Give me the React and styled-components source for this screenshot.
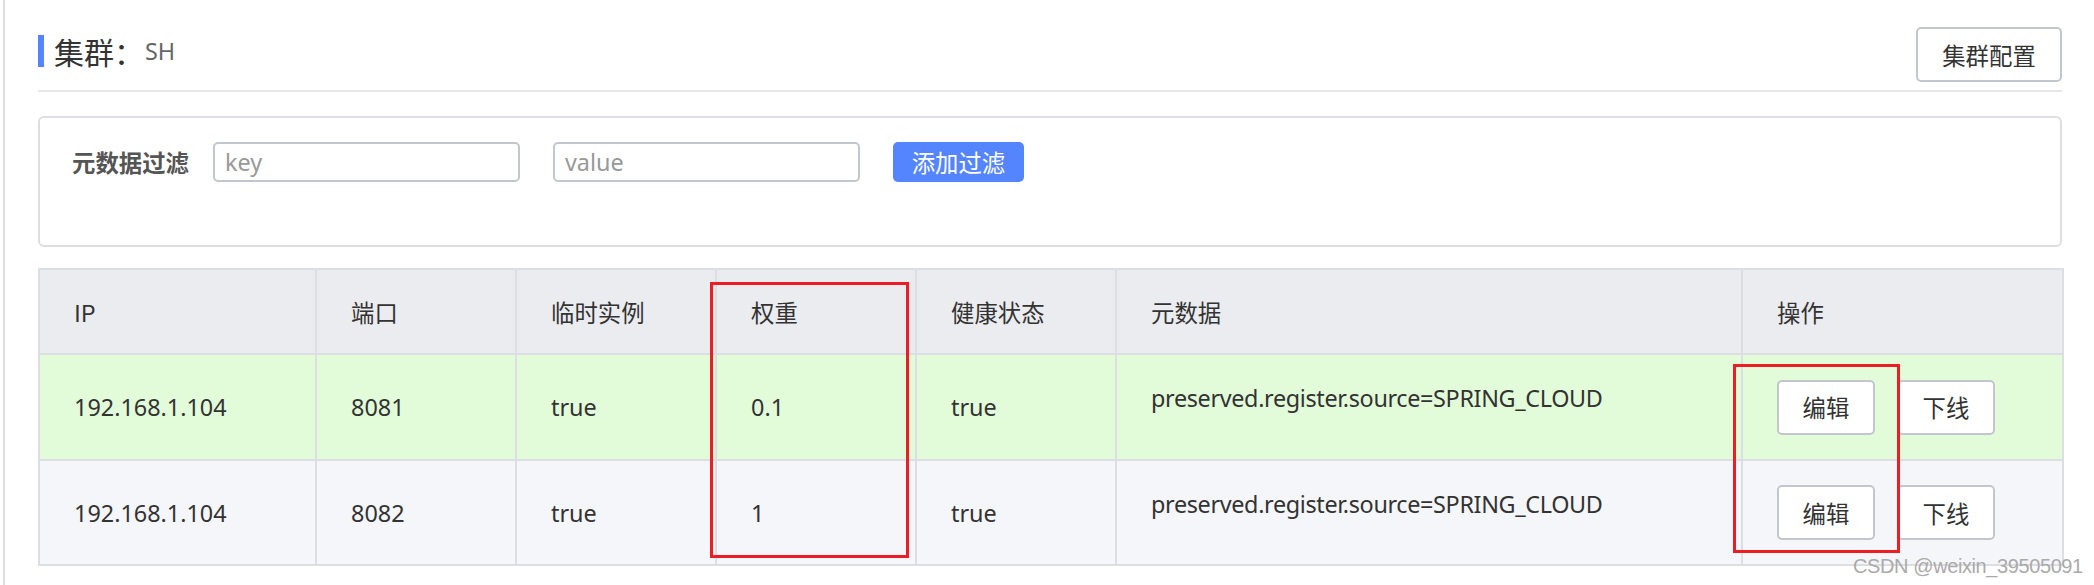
import React from "react";
import styled, { createGlobalStyle } from "styled-components";

const GlobalStyle = createGlobalStyle`
  html, body {
    margin: 0;
    padding: 0;
    background: #fff;
    font-family: "Noto Sans", "Noto Sans CJK SC", sans-serif;
    color: #333;
  }
  * { box-sizing: border-box; }
`;

const Page = styled.div`
  position: relative;
  min-height: 585px;
  margin-left: 3px;
  border-left: 2px solid #dcdde2;
  padding: 27px 32px 0 33px;
`;

const Header = styled.div`
  display: flex;
  justify-content: space-between;
  align-items: flex-start;
  padding-bottom: 8px;
  border-bottom: 2px solid #e6e7eb;
`;

const Title = styled.div`
  display: flex;
  align-items: center;
  margin-top: 8px;
  height: 32px;
  border-left: 6px solid #5584ff;
  padding-left: 10px;
  font-family: "Noto Sans CJK SC", sans-serif;
  font-size: 30px;
  line-height: 32px;
  color: #333;
`;

const ClusterName = styled.span`
  font-family: "Noto Sans", sans-serif;
  font-size: 23.4px;
  color: #666;
  margin-left: 1px;
`;

const Button = styled.button`
  height: 55px;
  min-width: ${p => p.$w || 98}px;
  padding: 0 18px;
  border: 2px solid #c4c6cf;
  border-radius: 5px;
  background: #fff;
  color: #333;
  font-family: "Noto Sans CJK SC", sans-serif;
  font-size: 23.4px;
  cursor: pointer;
`;

const FilterPanel = styled.div`
  margin-top: 24px;
  height: 131px;
  border: 2px solid #dcdee3;
  border-radius: 6px;
  padding: 24px 32px 0;
  display: flex;
  align-items: center;
`;

const FilterRow = styled.div`
  display: flex;
  align-items: center;
  height: 40px;
  align-self: flex-start;
`;

const FilterLabel = styled.span`
  font-family: "Noto Sans CJK SC", sans-serif;
  font-weight: 700;
  font-size: 23.4px;
  color: #555;
  margin-right: 24px;
`;

const Input = styled.input`
  width: 307px;
  height: 40px;
  border: 2px solid #c4c6cf;
  border-radius: 5px;
  padding: 0 10px;
  font-family: "Noto Sans", sans-serif;
  font-size: 23.4px;
  color: #333;
  margin-right: 33px;
  outline: none;
  &::placeholder { color: #999; }
`;

const PrimaryButton = styled.button`
  height: 40px;
  width: 131px;
  border: none;
  border-radius: 5px;
  background: #5584ff;
  color: #fff;
  font-family: "Noto Sans CJK SC", sans-serif;
  font-size: 23.4px;
  padding: 0;
  cursor: pointer;
`;

const TableWrap = styled.div`
  position: relative;
  margin-top: 21px;
`;

const Table = styled.table`
  width: 2024px;
  table-layout: fixed;
  border-collapse: separate;
  border-spacing: 0;
  border-top: 2px solid #dcdee3;
  border-left: 2px solid #dcdee3;
`;

const Row = styled.tr`
  height: ${p => p.$h}px;
  background: ${p => p.$bg};
`;

const Th = styled.th`
  text-align: left;
  font-weight: 400;
  font-family: "Noto Sans CJK SC", sans-serif;
  font-size: 23.4px;
  color: #333;
  padding: 0 34px;
  border-right: 2px solid #dcdee3;
  border-bottom: 2px solid #dcdee3;
`;

const Td = styled.td`
  font-size: 23.4px;
  color: #333;
  padding: 0 34px ${p => (p.$raised ? 18 : 0)}px;
  letter-spacing: ${p => (p.$raised ? "-0.35px" : "normal")};
  border-right: 2px solid #dcdee3;
  border-bottom: 2px solid #dcdee3;
  white-space: nowrap;
`;

const Actions = styled.div`
  display: flex;
  gap: 22px;
`;

const Mark = styled.div`
  position: absolute;
  border: 3px solid #ee1d24;
  pointer-events: none;
`;

const Watermark = styled.div`
  position: absolute;
  left: 1848px;
  top: 556px;
  font-family: "Liberation Sans", sans-serif;
  font-size: 20px;
  line-height: 1;
  letter-spacing: -0.4px;
  color: #aaa;
`;

const columns = [
  { title: "IP", width: 277 },
  { title: "端口", width: 200 },
  { title: "临时实例", width: 200 },
  { title: "权重", width: 200 },
  { title: "健康状态", width: 200 },
  { title: "元数据", width: 626 },
  { title: "操作", width: 321 },
];

const instances = [
  { ip: "192.168.1.104", port: 8081, ephemeral: "true", weight: "0.1", healthy: "true", bg: "#e2fcda", h: 106 },
  { ip: "192.168.1.104", port: 8082, ephemeral: "true", weight: "1", healthy: "true", bg: "#f5f6f9", h: 105 },
];

export default function App() {
  return (
    <>
      <GlobalStyle />
      <Page>
        <Header>
          <Title>
            集群：<ClusterName>SH</ClusterName>
          </Title>
          <Button $w={146}>集群配置</Button>
        </Header>

        <FilterPanel>
          <FilterRow>
            <FilterLabel>元数据过滤</FilterLabel>
            <Input placeholder="key" />
            <Input placeholder="value" />
            <PrimaryButton>添加过滤</PrimaryButton>
          </FilterRow>
        </FilterPanel>

        <TableWrap>
          <Table>
            <colgroup>
              {columns.map(c => (
                <col key={c.title} style={{ width: c.width }} />
              ))}
            </colgroup>
            <thead>
              <Row $h={85} $bg="#ebecf0">
                {columns.map(c => (
                  <Th key={c.title}>{c.title}</Th>
                ))}
              </Row>
            </thead>
            <tbody>
              {instances.map(r => (
                <Row key={r.port} $h={r.h} $bg={r.bg}>
                  <Td>{r.ip}</Td>
                  <Td>{r.port}</Td>
                  <Td>{r.ephemeral}</Td>
                  <Td>{r.weight}</Td>
                  <Td>{r.healthy}</Td>
                  <Td $raised>preserved.register.source=SPRING_CLOUD</Td>
                  <Td>
                    <Actions>
                      <Button>编辑</Button>
                      <Button>下线</Button>
                    </Actions>
                  </Td>
                </Row>
              ))}
            </tbody>
          </Table>
          <Mark style={{ left: 672, top: 14, width: 199, height: 276 }} />
          <Mark style={{ left: 1695, top: 96, width: 167, height: 189 }} />
        </TableWrap>

        <Watermark>CSDN @weixin_39505091</Watermark>
      </Page>
    </>
  );
}
